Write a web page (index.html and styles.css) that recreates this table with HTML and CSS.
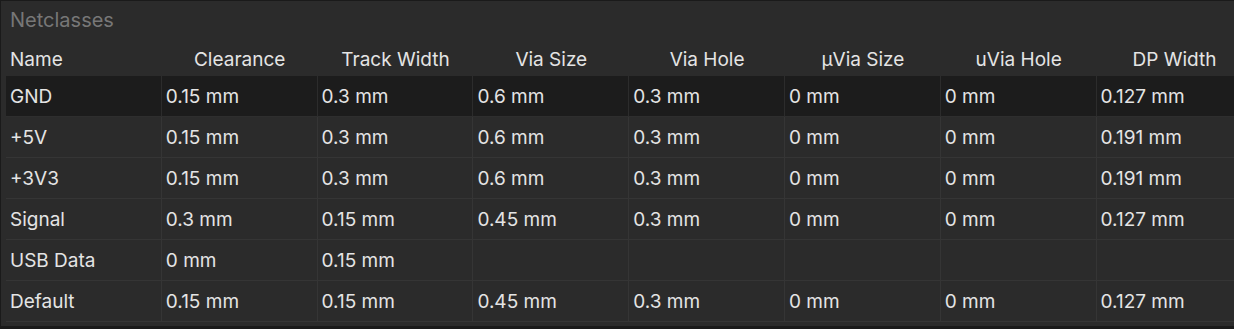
FILE: index.html
```html
<!DOCTYPE html>
<html>
<head>
<meta charset="utf-8">
<link rel="stylesheet" href="styles.css">
</head>
<body>
<div class="viewport">
  <div class="panel">
    <div class="title">Netclasses</div>
    <div class="table">
      <div class="row head">
        <div class="cell name">Name</div>
        <div class="cell">Clearance</div>
        <div class="cell">Track Width</div>
        <div class="cell">Via Size</div>
        <div class="cell">Via Hole</div>
        <div class="cell">µVia Size</div>
        <div class="cell">uVia Hole</div>
        <div class="cell">DP Width</div>
      </div>
      <div class="row data selected">
        <div class="cell">GND</div>
        <div class="cell">0.15 mm</div>
        <div class="cell">0.3 mm</div>
        <div class="cell">0.6 mm</div>
        <div class="cell">0.3 mm</div>
        <div class="cell">0 mm</div>
        <div class="cell">0 mm</div>
        <div class="cell">0.127 mm</div>
      </div>
      <div class="row data">
        <div class="cell">+5V</div>
        <div class="cell">0.15 mm</div>
        <div class="cell">0.3 mm</div>
        <div class="cell">0.6 mm</div>
        <div class="cell">0.3 mm</div>
        <div class="cell">0 mm</div>
        <div class="cell">0 mm</div>
        <div class="cell">0.191 mm</div>
      </div>
      <div class="row data">
        <div class="cell">+3V3</div>
        <div class="cell">0.15 mm</div>
        <div class="cell">0.3 mm</div>
        <div class="cell">0.6 mm</div>
        <div class="cell">0.3 mm</div>
        <div class="cell">0 mm</div>
        <div class="cell">0 mm</div>
        <div class="cell">0.191 mm</div>
      </div>
      <div class="row data">
        <div class="cell">Signal</div>
        <div class="cell">0.3 mm</div>
        <div class="cell">0.15 mm</div>
        <div class="cell">0.45 mm</div>
        <div class="cell">0.3 mm</div>
        <div class="cell">0 mm</div>
        <div class="cell">0 mm</div>
        <div class="cell">0.127 mm</div>
      </div>
      <div class="row data">
        <div class="cell">USB Data</div>
        <div class="cell">0 mm</div>
        <div class="cell">0.15 mm</div>
        <div class="cell"></div>
        <div class="cell"></div>
        <div class="cell"></div>
        <div class="cell"></div>
        <div class="cell"></div>
      </div>
      <div class="row data">
        <div class="cell">Default</div>
        <div class="cell">0.15 mm</div>
        <div class="cell">0.15 mm</div>
        <div class="cell">0.45 mm</div>
        <div class="cell">0.3 mm</div>
        <div class="cell">0 mm</div>
        <div class="cell">0 mm</div>
        <div class="cell">0.127 mm</div>
      </div>
    </div>
  </div>
</div>
</body>
</html>
```

FILE: styles.css
```css
html, body {
  margin: 0;
  padding: 0;
  background: #1a1a1a;
}
.viewport {
  width: 1234px;
  height: 329px;
  overflow: hidden;
}
.panel {
  width: 1300px;
  height: 326px;
  box-sizing: border-box;
  border-top: 1px solid #1a1a1a;
  border-left: 1px solid #1a1a1a;
  background: #2b2b2b;
  font-family: Inter, "Noto Sans", sans-serif;
  font-size: 19px;
  color: #e4e4e4;
}
.title {
  height: 40px;
  line-height: 38px;
  padding-left: 9px;
  font-size: 20px;
  color: #777777;
}
.table {
  margin-left: 5px;
  display: flex;
  flex-direction: column;
}
.row {
  display: grid;
  grid-template-columns: repeat(8, 155.8px);
}
.head {
  height: 35px;
  align-items: center;
}
.head .cell {
  text-align: center;
  padding-top: 1px;
}
.head .cell.name {
  text-align: left;
  padding-left: 4px;
}
.data {
  height: 41px;
  box-sizing: border-box;
  border-bottom: 1px solid #353535;
}
.data .cell {
  padding-left: 4px;
  padding-top: 1px;
  line-height: 39px;
  border-right: 1px solid #353535;
  white-space: nowrap;
}
.selected {
  background: #1c1c1c;
  border-bottom-color: #2e2e2e;
}
.selected .cell {
  border-right-color: #2c2c2c;
}
```
